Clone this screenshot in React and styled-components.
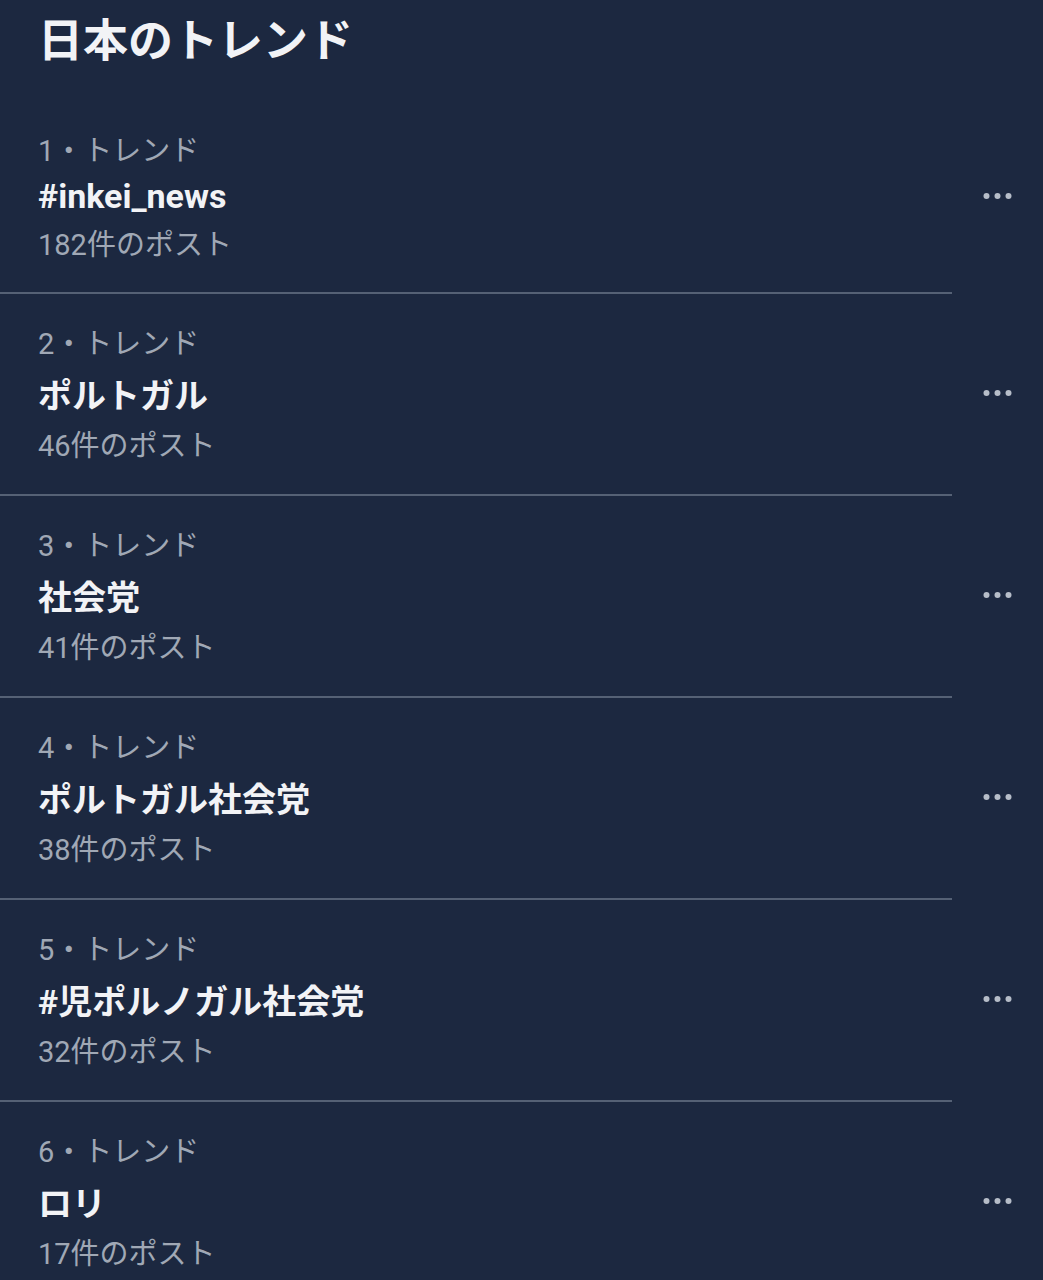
import React from "react";
import styled, { createGlobalStyle } from "styled-components";

const GlobalStyle = createGlobalStyle`
  html, body {
    margin: 0;
    padding: 0;
    background: #1c2840;
  }
  body {
    font-family: Roboto, "Noto Sans CJK JP", "Noto Sans", sans-serif;
    -webkit-font-smoothing: antialiased;
  }
`;

const Page = styled.div`
  width: 1043px;
  min-height: 1280px;
  background: #1c2840;
  overflow: hidden;
`;

const Header = styled.h1`
  margin: 0 0 8px;
  padding: 0 38px;
  height: 84px;
  line-height: 84px;
  font-size: 45px;
  font-weight: 700;
  color: #f2f3f6;
  letter-spacing: 0;
`;

const List = styled.div`
  display: flex;
  flex-direction: column;
`;

const Row = styled.div`
  display: flex;
  flex-direction: column;
  padding: ${(p) => (p.$first ? "35px 30px 19px 38px" : "26px 30px 20px 38px")};
`;

const Label = styled.div`
  font-size: 29px;
  line-height: 48px;
  color: #a0a8b5;
  white-space: nowrap;
`;

const TitleLine = styled.div`
  display: flex;
  align-items: center;
  justify-content: space-between;
  height: ${(p) => (p.$first ? "42px" : "50px")};
`;

const Title = styled.div`
  font-size: 34px;
  font-weight: 700;
  color: #f2f3f6;
  white-space: nowrap;
`;

const Count = styled.div`
  font-size: 29px;
  line-height: 56px;
  color: #a0a8b5;
  white-space: nowrap;
`;

const MoreButton = styled.button`
  display: flex;
  align-items: center;
  justify-content: center;
  padding: 0;
  border: none;
  background: none;
  width: 30px;
  height: 10px;
  color: #b6bdc8;
  cursor: pointer;
`;

const Divider = styled.div`
  width: 952px;
  height: 2px;
  background: #556175;
`;

const MoreIcon = () => (
  <svg width="30" height="8" viewBox="0 0 30 8" aria-hidden="true">
    <circle cx="3.5" cy="4" r="3" fill="currentColor" />
    <circle cx="14.5" cy="4" r="3" fill="currentColor" />
    <circle cx="25.5" cy="4" r="3" fill="currentColor" />
  </svg>
);

const trends = [
  { title: "#inkei_news", count: "182件のポスト" },
  { title: "ポルトガル", count: "46件のポスト" },
  { title: "社会党", count: "41件のポスト" },
  { title: "ポルトガル社会党", count: "38件のポスト" },
  { title: "#児ポルノガル社会党", count: "32件のポスト" },
  { title: "ロリ", count: "17件のポスト" },
];

export default function App() {
  return (
    <Page>
      <GlobalStyle />
      <Header>日本のトレンド</Header>
      <List>
        {trends.map((t, i) => (
          <React.Fragment key={t.title}>
            {i > 0 && <Divider />}
            <Row $first={i === 0}>
              <Label>{i + 1}・トレンド</Label>
              <TitleLine $first={i === 0}>
                <Title>{t.title}</Title>
                <MoreButton aria-label="その他">
                  <MoreIcon />
                </MoreButton>
              </TitleLine>
              <Count>{t.count}</Count>
            </Row>
          </React.Fragment>
        ))}
      </List>
    </Page>
  );
}
